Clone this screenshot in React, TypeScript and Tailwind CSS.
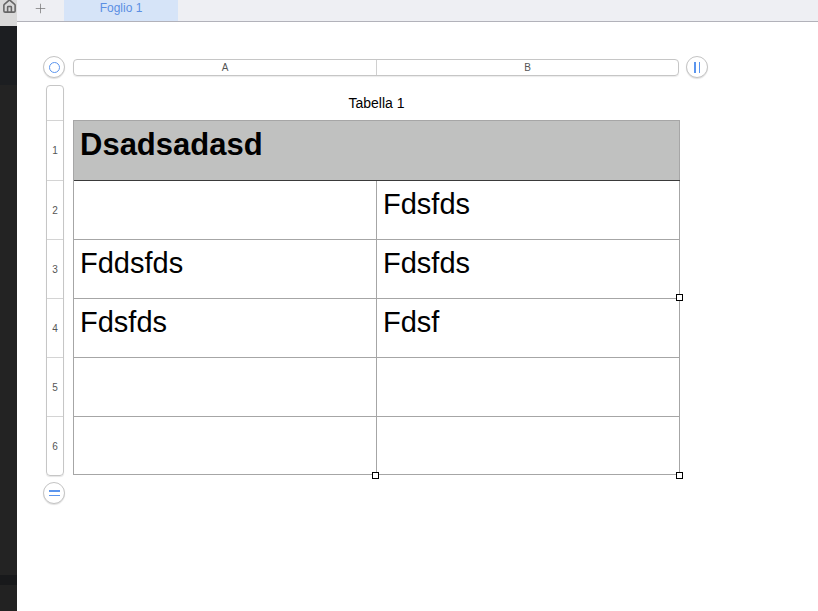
import { House, Plus } from "lucide-react";

const rows = [
  { a: "Dsadsadasd", b: "", h: "h-[60px]", head: true },
  { a: "", b: "Fdsfds", h: "h-[59px]" },
  { a: "Fddsfds", b: "Fdsfds", h: "h-[59px]" },
  { a: "Fdsfds", b: "Fdsf", h: "h-[59px]" },
  { a: "", b: "", h: "h-[59px]" },
  { a: "", b: "", h: "h-[58px]" },
];

function Handle({ className }: { className: string }) {
  return <div className={`absolute w-[7px] h-[7px] bg-white border border-black ${className}`} />;
}

function RoundButton({ children }: { children: React.ReactNode }) {
  return (
    <div className="w-[22px] h-[22px] rounded-full border border-[#c4c4c4] bg-white shadow-[0_1px_1px_rgba(0,0,0,0.12)] flex items-center justify-center shrink-0">
      {children}
    </div>
  );
}

export default function App() {
  return (
    <div className="w-[818px] h-[611px] flex overflow-hidden bg-white" style={{ fontFamily: '"Liberation Sans", Arial, sans-serif' }}>
      {/* side strip */}
      <div className="w-[17px] flex flex-col shrink-0">
        <div className="h-[26px] bg-[#d9d9d9] flex justify-center overflow-hidden">
          <House className="w-[15px] h-[15px] text-[#666] -mt-[1px] ml-[2px]" strokeWidth={2.5} />
        </div>
        <div className="h-[59px] bg-[#1c1e21]" />
        <div className="flex-1 bg-[#232323]" />
        <div className="h-[10px] bg-[#18191b]" />
        <div className="h-[26px] bg-[#222222]" />
      </div>

      <div className="flex-1 flex flex-col">
        {/* tab bar */}
        <div className="h-[22px] bg-[#eeeff3] border-b border-[#b2b2ba] flex items-stretch">
          <div className="w-[47px] flex items-center justify-center pb-[4px]">
            <Plus className="w-[15px] h-[15px] text-[#777]" strokeWidth={1.2} />
          </div>
          <div className="w-[114px] bg-[#d6e4f8] flex items-center justify-center text-[12px] text-[#5b8fe3] pb-[5px]">
            Foglio 1
          </div>
        </div>

        {/* sheet */}
        <div className="pl-[26px] pt-[34px] flex flex-col">
          <div className="flex items-center">
            <RoundButton>
              <div className="w-[11px] h-[11px] rounded-full border-[1.5px] border-[#5b95ee]" />
            </RoundButton>
            <div className="ml-[8px] w-[606px] h-[17px] rounded-[4px] border border-[#c6c6c6] shadow-[0_1px_1px_rgba(0,0,0,0.08)] flex text-[10px] text-[#555]">
              <div className="w-[303px] flex items-center justify-center border-r border-[#d0d0d0]">A</div>
              <div className="flex-1 flex items-center justify-center">B</div>
            </div>
            <div className="ml-[7px]">
              <RoundButton>
                <div className="flex gap-[3px]">
                  <div className="w-[1.5px] h-[11px] bg-[#5b95ee]" />
                  <div className="w-[1.5px] h-[11px] bg-[#5b95ee]" />
                </div>
              </RoundButton>
            </div>
          </div>

          <div className="flex items-start mt-[7px]">
            <div className="ml-[3px] w-[18px] rounded-[4px] border border-[#c6c6c6] shadow-[0_1px_1px_rgba(0,0,0,0.1)] flex flex-col text-[10px] text-[#555]">
              <div className="h-[35px] border-b border-[#d4d4d4]" />
              {rows.map((r, i) => (
                <div
                  key={i}
                  className={`${r.h} flex items-center justify-center ${i < rows.length - 1 ? "border-b border-[#d4d4d4]" : ""}`}
                >
                  {i + 1}
                </div>
              ))}
            </div>

            <div className="ml-[9px] flex flex-col">
              <div className="h-[35px] flex items-center justify-center pt-[2px] text-[14px] text-black">Tabella 1</div>
              <div className="relative w-[607px]">
                <div className="border-l border-t border-[#a6a6a6]">
                  {rows.map((r, i) => (
                    <div
                      key={i}
                      className={`grid grid-cols-[303px_303px] ${r.h} ${r.head ? "bg-[#c0c1c0] border-b border-[#3a3a3a]" : "border-b border-[#a6a6a6]"}`}
                    >
                      {r.head ? (
                        <div className="col-span-2 px-[6px] pt-[7px] text-[31px] font-bold leading-[33px] text-black border-r border-[#a6a6a6]">
                          {r.a}
                        </div>
                      ) : (
                        <>
                          <div className="px-[6px] pt-[8px] text-[29px] leading-[30px] text-black border-r border-[#a6a6a6]">{r.a}</div>
                          <div className="px-[6px] pt-[8px] text-[29px] leading-[30px] text-black border-r border-[#a6a6a6]">{r.b}</div>
                        </>
                      )}
                    </div>
                  ))}
                </div>
                <Handle className="left-[299px] -bottom-[4px]" />
                <Handle className="-right-[3px] -bottom-[4px]" />
                <Handle className="-right-[3px] top-[174px]" />
              </div>
            </div>
          </div>

          <div className="mt-[6px]">
            <RoundButton>
              <div className="flex flex-col gap-[3px]">
                <div className="w-[11px] h-[1.5px] bg-[#5b95ee]" />
                <div className="w-[11px] h-[1.5px] bg-[#5b95ee]" />
              </div>
            </RoundButton>
          </div>
        </div>
      </div>
    </div>
  );
}
